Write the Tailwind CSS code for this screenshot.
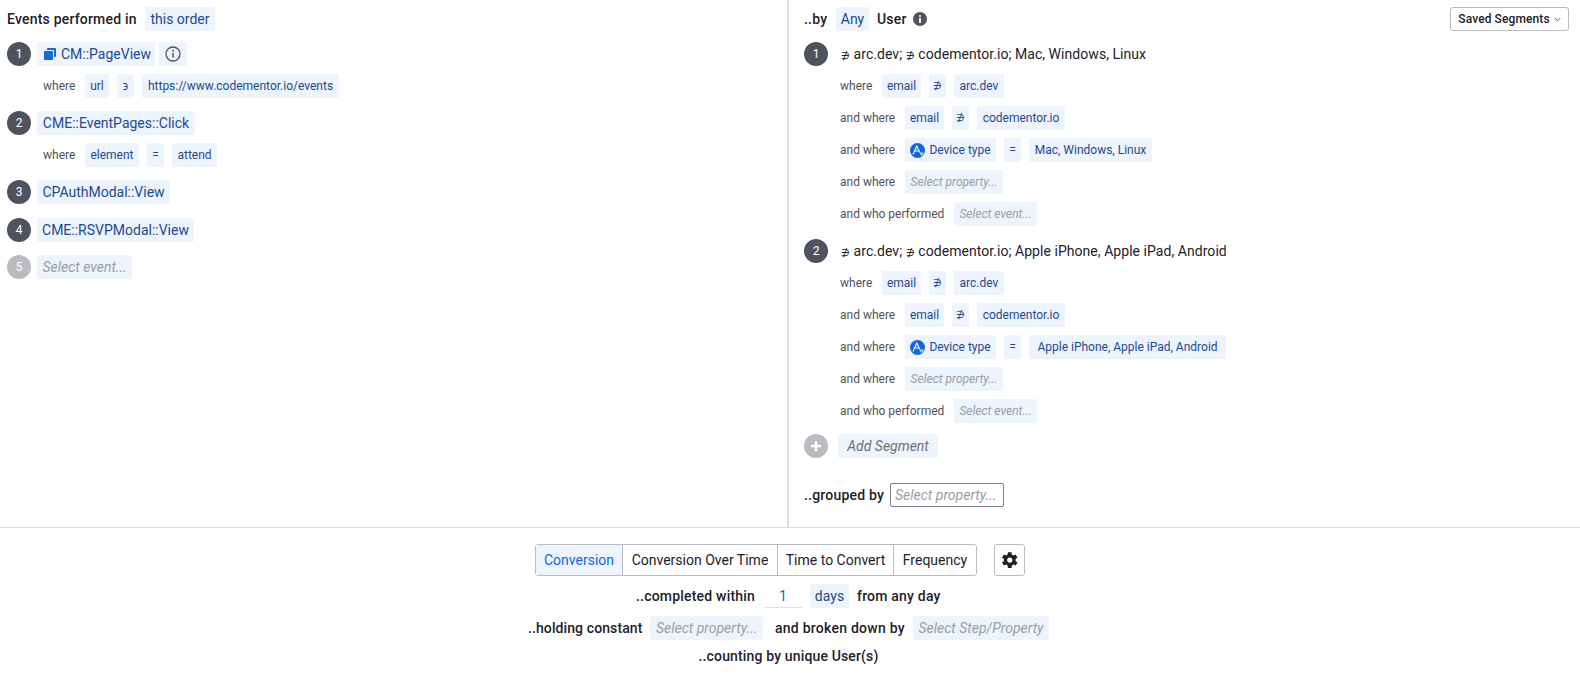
<!DOCTYPE html>
<html lang="en">
<head>
    <meta charset="UTF-8">
    <title>Funnel Query</title>
    <script src="https://cdn.jsdelivr.net/npm/@tailwindcss/browser@4"></script>
</head>
<body class="bg-white text-[#1e2129] font-['Roboto',sans-serif] text-[14px] leading-[24px] w-[1580px] h-[674px] overflow-hidden">

    <div class="flex h-[528px] border-b border-[#dcdee2]">
        <!-- events -->
        <div class="w-[789px] pl-[7px] pt-[7px] border-r-2 border-[#dcdee2]">
            <div class="flex h-6 items-center">
                <span class="w-[138px] font-medium tracking-[0.2px]">Events performed in</span>
                <span class="h-6 w-[70px] rounded-[2px] bg-[#edf4fd] text-[#1c4a90] text-center">this order</span>
            </div>

            <div class="flex gap-1.5 mt-[11px]">
                <span class="w-6 h-6 rounded-full bg-[#4f535d] text-white text-[12px] flex items-center justify-center">1</span>
                <span class="h-6 w-[118px] pl-[7px] rounded-[2px] bg-[#edf4fd] text-[#1c4a90] flex items-center gap-[5px]">
                    <svg class="w-[12px] h-[12px]" viewBox="0 0 12 12"><path fill="#1566d6" d="M4 0h7a1 1 0 0 1 1 1v7a1 1 0 0 1-1 1h-1V3a1 1 0 0 0-1-1H3V1a1 1 0 0 1 1-1z"/><rect y="3" width="9" height="9" rx="1" fill="#1566d6"/></svg>
                    CM::PageView
                </span>
                <span class="h-6 w-7 -ml-[2px] rounded-[2px] bg-[#edf4fd] flex items-center justify-center">
                    <svg class="w-[16px] h-[16px]" viewBox="0 0 16 16" fill="none"><circle cx="8" cy="8" r="7" stroke="#4f535d" stroke-width="1.3"/><path d="M8 7v4.5" stroke="#4f535d" stroke-width="1.5"/><circle cx="8" cy="4.8" r="1" fill="#4f535d"/></svg>
                </span>
            </div>
            <div class="flex gap-2 mt-2 pl-[36px] text-[12px] items-center">
                <span class="w-[34px] text-[#4f535d]">where</span>
                <span class="h-6 w-6 rounded-[2px] bg-[#edf4fd] text-[#1c4a90] text-center">url</span>
                <span class="h-6 w-[17px] rounded-[2px] bg-[#edf4fd] text-[#1c4a90] text-center">϶</span>
                <span class="h-6 w-[197px] rounded-[2px] bg-[#edf4fd] text-[#1c4a90] text-center">https://www.codementor.io/events</span>
            </div>

            <div class="flex gap-1.5 mt-[13px]">
                <span class="w-6 h-6 rounded-full bg-[#4f535d] text-white text-[12px] flex items-center justify-center">2</span>
                <span class="h-6 w-[158px] rounded-[2px] bg-[#edf4fd] text-[#1c4a90] text-center">CME::EventPages::Click</span>
            </div>
            <div class="flex gap-2 mt-2 pl-[36px] text-[12px] items-center">
                <span class="w-[34px] text-[#4f535d]">where</span>
                <span class="h-6 w-[54px] rounded-[2px] bg-[#edf4fd] text-[#1c4a90] text-center">element</span>
                <span class="h-6 w-[17px] rounded-[2px] bg-[#edf4fd] text-[#1c4a90] text-center">=</span>
                <span class="h-6 w-[45px] rounded-[2px] bg-[#edf4fd] text-[#1c4a90] text-center">attend</span>
            </div>

            <div class="flex gap-1.5 mt-[13px]">
                <span class="w-6 h-6 rounded-full bg-[#4f535d] text-white text-[12px] flex items-center justify-center">3</span>
                <span class="h-6 w-[133px] rounded-[2px] bg-[#edf4fd] text-[#1c4a90] text-center">CPAuthModal::View</span>
            </div>
            <div class="flex gap-1.5 mt-[14px]">
                <span class="w-6 h-6 rounded-full bg-[#4f535d] text-white text-[12px] flex items-center justify-center">4</span>
                <span class="h-6 w-[157px] rounded-[2px] bg-[#edf4fd] text-[#1c4a90] text-center">CME::RSVPModal::View</span>
            </div>
            <div class="flex gap-1.5 mt-[13px]">
                <span class="w-6 h-6 rounded-full bg-[#b9bbc1] text-white text-[12px] flex items-center justify-center">5</span>
                <span class="h-6 w-[95px] rounded-[2px] bg-[#edf4fd] text-[#9a9da5] italic text-center">Select event...</span>
            </div>
        </div>

        <!-- segments -->
        <div class="flex-1 pl-[15px] pr-[11px] pt-[7px]">
            <div class="flex items-center h-6">
                <span class="font-medium w-[32px] tracking-[0.2px]">..by</span>
                <span class="h-6 w-[33px] rounded-[2px] bg-[#edf4fd] text-[#1c4a90] text-center">Any</span>
                <span class="font-medium ml-2 tracking-[0.2px]">User</span>
                <svg class="w-[14px] h-[14px] ml-[6px]" viewBox="0 0 14 14"><circle cx="7" cy="7" r="7" fill="#4f535d"/><rect x="6.1" y="6" width="1.8" height="5" fill="#fff"/><circle cx="7" cy="4" r="1.1" fill="#fff"/></svg>
                <button class="ml-auto h-6 w-[119px] border border-[#b9bbc1] rounded-[3px] text-[12px] font-medium tracking-[0.1px] flex items-center justify-center gap-1">
                    Saved Segments
                    <svg class="w-[7px] h-[5px]" viewBox="0 0 7 5" fill="none"><path d="M.7 1l2.8 2.8L6.3 1" stroke="#4f535d"/></svg>
                </button>
            </div>

            <div class="flex h-6 mt-[11px]">
                <span class="w-6 h-6 rounded-full bg-[#4f535d] text-white text-[12px] flex items-center justify-center">1</span>
                <span class="ml-[13px] tracking-[0.05px]"><span class="text-[10px]">∌</span> arc.dev; <span class="text-[10px]">∌</span> codementor.io; Mac, Windows, Linux</span>
            </div>
            <div class="pl-[36px] text-[12px] text-[#4f535d]">
                <div class="flex gap-2 mt-2 h-6"><span class="w-[34px]">where</span><span class="h-6 w-[39px] rounded-[2px] bg-[#edf4fd] text-[#1c4a90] text-center">email</span><span class="h-6 w-[17px] rounded-[2px] bg-[#edf4fd] text-[#1c4a90] text-center text-[10px]">∌</span><span class="h-6 w-[50px] rounded-[2px] bg-[#edf4fd] text-[#1c4a90] text-center">arc.dev</span></div>
                <div class="flex gap-2 mt-2 h-6"><span class="w-[57px]">and where</span><span class="h-6 w-[39px] rounded-[2px] bg-[#edf4fd] text-[#1c4a90] text-center">email</span><span class="h-6 w-[17px] rounded-[2px] bg-[#edf4fd] text-[#1c4a90] text-center text-[10px]">∌</span><span class="h-6 w-[88px] rounded-[2px] bg-[#edf4fd] text-[#1c4a90] text-center">codementor.io</span></div>
                <div class="flex gap-2 mt-2 h-6"><span class="w-[57px]">and where</span><span class="h-6 w-[91px] rounded-[2px] bg-[#edf4fd] text-[#1c4a90] flex items-center justify-center gap-1"><svg class="w-[15px] h-[15px]" viewBox="0 0 15 15"><circle cx="7.5" cy="7.5" r="7.5" fill="#1566d6"/><path d="M3 11.5L6.8 3l3 6.5M4.4 8h4" stroke="#fff" fill="none" stroke-width="1.1"/><path d="M10 10h3.2l-1.6 2.6z" stroke="#fff" fill="none" stroke-width=".8"/></svg>Device type</span><span class="h-6 w-[17px] rounded-[2px] bg-[#edf4fd] text-[#1c4a90] text-center">=</span><span class="h-6 w-[123px] rounded-[2px] bg-[#edf4fd] text-[#1c4a90] text-center">Mac, Windows, Linux</span></div>
                <div class="flex gap-2 mt-2 h-6"><span class="w-[57px]">and where</span><span class="h-6 w-[98px] rounded-[2px] bg-[#edf4fd] text-[#9a9da5] italic text-center">Select property...</span></div>
                <div class="flex gap-2 mt-2 h-6"><span class="w-[106px]">and who performed</span><span class="h-6 w-[83px] rounded-[2px] bg-[#edf4fd] text-[#9a9da5] italic text-center">Select event...</span></div>
            </div>

            <div class="flex h-6 mt-[13px]">
                <span class="w-6 h-6 rounded-full bg-[#4f535d] text-white text-[12px] flex items-center justify-center">2</span>
                <span class="ml-[13px] tracking-[0.05px]"><span class="text-[10px]">∌</span> arc.dev; <span class="text-[10px]">∌</span> codementor.io; Apple iPhone, Apple iPad, Android</span>
            </div>
            <div class="pl-[36px] text-[12px] text-[#4f535d]">
                <div class="flex gap-2 mt-2 h-6"><span class="w-[34px]">where</span><span class="h-6 w-[39px] rounded-[2px] bg-[#edf4fd] text-[#1c4a90] text-center">email</span><span class="h-6 w-[17px] rounded-[2px] bg-[#edf4fd] text-[#1c4a90] text-center text-[10px]">∌</span><span class="h-6 w-[50px] rounded-[2px] bg-[#edf4fd] text-[#1c4a90] text-center">arc.dev</span></div>
                <div class="flex gap-2 mt-2 h-6"><span class="w-[57px]">and where</span><span class="h-6 w-[39px] rounded-[2px] bg-[#edf4fd] text-[#1c4a90] text-center">email</span><span class="h-6 w-[17px] rounded-[2px] bg-[#edf4fd] text-[#1c4a90] text-center text-[10px]">∌</span><span class="h-6 w-[88px] rounded-[2px] bg-[#edf4fd] text-[#1c4a90] text-center">codementor.io</span></div>
                <div class="flex gap-2 mt-2 h-6"><span class="w-[57px]">and where</span><span class="h-6 w-[91px] rounded-[2px] bg-[#edf4fd] text-[#1c4a90] flex items-center justify-center gap-1"><svg class="w-[15px] h-[15px]" viewBox="0 0 15 15"><circle cx="7.5" cy="7.5" r="7.5" fill="#1566d6"/><path d="M3 11.5L6.8 3l3 6.5M4.4 8h4" stroke="#fff" fill="none" stroke-width="1.1"/><path d="M10 10h3.2l-1.6 2.6z" stroke="#fff" fill="none" stroke-width=".8"/></svg>Device type</span><span class="h-6 w-[17px] rounded-[2px] bg-[#edf4fd] text-[#1c4a90] text-center">=</span><span class="h-6 w-[197px] rounded-[2px] bg-[#edf4fd] text-[#1c4a90] text-center">Apple iPhone, Apple iPad, Android</span></div>
                <div class="flex gap-2 mt-2 h-6"><span class="w-[57px]">and where</span><span class="h-6 w-[98px] rounded-[2px] bg-[#edf4fd] text-[#9a9da5] italic text-center">Select property...</span></div>
                <div class="flex gap-2 mt-2 h-6"><span class="w-[106px]">and who performed</span><span class="h-6 w-[83px] rounded-[2px] bg-[#edf4fd] text-[#9a9da5] italic text-center">Select event...</span></div>
            </div>

            <div class="flex gap-[10px] mt-[11px]">
                <span class="w-6 h-6 rounded-full bg-[#b9bbc1] flex items-center justify-center">
                    <svg class="w-[12px] h-[12px]" viewBox="0 0 12 12"><path d="M6 1v10M1 6h10" stroke="#fff" stroke-width="2.4"/></svg>
                </span>
                <span class="h-6 w-[100px] rounded-[2px] bg-[#edf4fd] text-[#6d7079] italic text-center">Add Segment</span>
            </div>

            <div class="flex items-center mt-[25px]">
                <span class="font-medium w-[86px] tracking-[0.2px]">..grouped by</span>
                <span class="h-6 w-[114px] border border-[#7d8088] rounded-[2px] text-[#9a9da5] italic pl-[4px] leading-[22px]">Select property...</span>
            </div>
        </div>
    </div>

    <!-- bottom controls -->
    <div class="flex flex-col items-center">
        <div class="flex gap-[17px] mt-[16px] mr-[20px]">
            <div class="flex h-[32px] w-[442px] border border-[#b9bbc1] rounded-[3px] leading-[30px] text-center">
                <span class="w-[87px] bg-[#edf4fd] text-[#1566d6] border-r border-[#b9bbc1]">Conversion</span>
                <span class="w-[155px] border-r border-[#b9bbc1]">Conversion Over Time</span>
                <span class="w-[116px] border-r border-[#b9bbc1]">Time to Convert</span>
                <span class="flex-1">Frequency</span>
            </div>
            <button class="w-[31px] h-[32px] border border-[#b9bbc1] rounded-[3px] flex items-center justify-center">
                <svg class="w-[18px] h-[18px]" viewBox="0 0 24 24"><path fill="#1e2129" d="M19.4 13.2c.1-.4.1-.8.1-1.2s0-.8-.1-1.2l2.5-2-2.4-4.1-3 1.2c-.6-.5-1.3-.9-2.1-1.2L14 1.5H9.3l-.5 3.2c-.7.3-1.4.7-2 1.2l-3-1.2-2.4 4.1 2.5 2c0 .4-.1.8-.1 1.2s0 .8.1 1.2l-2.5 2 2.4 4.1 3-1.2c.6.5 1.3.9 2 1.2l.5 3.2H14l.5-3.2c.8-.3 1.5-.7 2.1-1.2l3 1.2 2.4-4.1zM11.7 15.5a3.5 3.5 0 1 1 0-7 3.5 3.5 0 0 1 0 7z"/></svg>
            </button>
        </div>
        <div class="flex items-center h-6 mt-[8px] mr-[3px]">
            <span class="w-[120px] font-medium tracking-[0.2px] whitespace-nowrap">..completed within</span>
            <span class="w-[38px] h-6 ml-2 text-center text-[#1566d6] border-b border-[#d6e4f7]">1</span>
            <span class="h-6 w-[39px] ml-2 rounded-[2px] bg-[#edf4fd] text-[#1c4a90] text-center">days</span>
            <span class="ml-2 w-[84px] font-medium tracking-[0.2px] whitespace-nowrap">from any day</span>
        </div>
        <div class="flex items-center h-6 mt-[8px] mr-[3px]">
            <span class="w-[114px] font-medium tracking-[0.1px] whitespace-nowrap">..holding constant</span>
            <span class="h-6 w-[113px] ml-2 rounded-[2px] bg-[#edf4fd] text-[#9a9da5] italic text-center">Select property...</span>
            <span class="ml-3 w-[130px] font-medium tracking-[0.25px] whitespace-nowrap">and broken down by</span>
            <span class="h-6 w-[136px] ml-2 rounded-[2px] bg-[#edf4fd] text-[#9a9da5] italic text-center">Select Step/Property</span>
        </div>
        <div class="font-medium tracking-[0.15px] mt-[4px] mr-[3px]">..counting by unique User(s)</div>
    </div>

</body>
</html>
